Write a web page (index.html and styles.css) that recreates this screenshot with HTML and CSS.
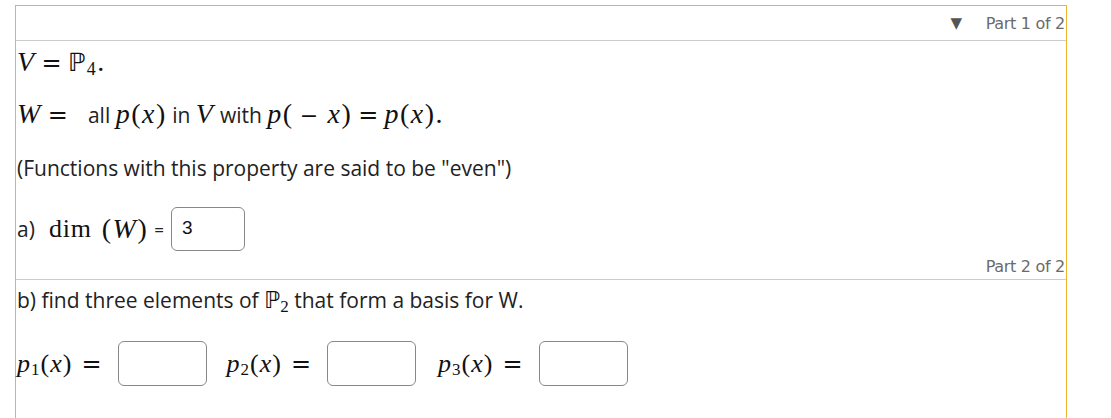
FILE: index.html
```html
<!DOCTYPE html>
<html>
<head>
<meta charset="utf-8">
<link rel="stylesheet" href="styles.css">
</head>
<body>
<div class="frame">
  <div class="part-head first">
    <span class="tri">▼</span>
    <span class="part-label">Part 1 of 2</span>
  </div>
  <div class="part-body">
    <p class="line l1"><span class="m"><i>V</i><span class="op rel">=</span><span class="bb">ℙ</span><sub>4</sub>.</span></p>
    <p class="line l2"><span class="m"><i>W</i><span class="op rel">=</span></span><span class="t gapl">all </span><span class="m"><i>p</i>(<i>x</i>)</span><span class="t"> in </span><span class="m"><i>V</i></span><span class="t"> with </span><span class="m"><i>p</i>(<span class="minus">−</span><i>x</i>)<span class="op rel">=</span><i>p</i>(<i>x</i>).</span></p>
    <p class="line l3 t">(Functions with this property are said to be "even")</p>
    <div class="row l4">
      <span class="t">a)</span>
      <span class="m dim">dim</span>
      <span class="m paren">(<i>W</i>)</span>
      <span class="t eq">=</span>
      <span class="box small">3</span>
    </div>
  </div>
  <div class="part-head second">
    <span class="part-label">Part 2 of 2</span>
  </div>
  <div class="part-body">
    <p class="line l5 t">b) find three elements of <span class="m"><span class="bb">ℙ</span><sub>2</sub></span> that form a basis for W.</p>
    <div class="row l6">
      <span class="m pl"><i>p</i><span class="sub">1</span>(<i>x</i>)</span><span class="op eqp">=</span>
      <span class="box"></span>
      <span class="m pl"><i>p</i><span class="sub">2</span>(<i>x</i>)</span><span class="op eqp">=</span>
      <span class="box"></span>
      <span class="m pl"><i>p</i><span class="sub">3</span>(<i>x</i>)</span><span class="op eqp">=</span>
      <span class="box"></span>
    </div>
  </div>
</div>
</body>
</html>
```
FILE: styles.css
```css
html, body {
  margin: 0;
  padding: 0;
  background: #fff;
}
body {
  padding: 5px 0 0 15px;
  font-family: "Open Sans", "DejaVu Sans", sans-serif;
  color: #222;
  height: 413px;
  overflow: hidden;
}
.frame {
  width: 1050px;
  border: 1px solid #f0b429;
  border-bottom: none;
  height: 420px;
}
.part-head {
  display: flex;
  justify-content: flex-end;
  align-items: center;
  border-bottom: 1px solid #cccccc;
  color: #6b6b6b;
  font-size: 16px;
  font-family: "DejaVu Sans", sans-serif;
  letter-spacing: -0.3px;
}
.part-head.first {
  height: 34px;
}
.part-head.second {
  height: 29px;
  box-sizing: border-box;
  align-items: flex-end;
  padding-bottom: 3px;
}
.tri {
  font-size: 15px;
  color: #555;
  margin-right: 24px;
}
.part-label {
  margin-right: 1px;
}
.part-body {
  padding-left: 1px;
}
.line {
  margin: 0;
  white-space: nowrap;
}
.row {
  display: flex;
  align-items: center;
}
.t {
  font-size: 21px;
  font-family: "Open Sans", "DejaVu Sans", sans-serif;
  color: #222;
  letter-spacing: 0;
}
.m {
  font-family: "Liberation Serif", serif;
  font-size: 28px;
  color: #111;
  letter-spacing: 1.5px;
}
.m i {
  font-family: "Liberation Serif", serif;
  font-style: italic;
}
.op {
  font-family: "DejaVu Serif", serif;
  font-size: 24px;
  letter-spacing: 0;
  color: #111;
}
.rel { margin: 0 6px 0 6px; }
.minus { margin: 0 8px 0 6px; font-family: "DejaVu Serif", serif; font-size: 22px; }
.gapl { margin-left: 14px; }
.bb {
  font-family: "DejaVu Sans", sans-serif;
  font-size: 25px;
}
sub {
  font-size: 18px;
  font-family: "Liberation Serif", serif;
  vertical-align: -4px;
  line-height: 0;
}
.l1 { height: 42px; line-height: 42px; }
.l2 { height: 62px; line-height: 62px; }
.l3 { height: 46px; line-height: 46px; }
.l4 { height: 44px; margin-top: 16px; }
.l4 .dim {
  font-size: 26px;
  margin-left: 14px;
  letter-spacing: 0.8px;
}
.l4 .paren { margin-left: 10px; font-size: 28px; }
.l4 .eq {
  font-size: 17px;
  margin: 0 7px 0 6px;
}
.box {
  display: inline-block;
  box-sizing: border-box;
  width: 89px;
  height: 45px;
  border: 1px solid #888;
  border-radius: 6px;
  background: #fff;
}
.box.small {
  width: 74px;
  height: 44px;
  font-family: "Liberation Sans", sans-serif;
  font-size: 19px;
  color: #111;
  padding: 9px 0 0 10px;
}
.l5 { height: 40px; line-height: 40px; }
.l5 .m { font-size: 22px; letter-spacing: 0; }
.l5 .bb { font-size: 23px; }
.l5 sub { font-size: 17px; }
.l6 { height: 45px; margin-top: 21px; }
.l6 .pl {
  font-size: 26px;
  letter-spacing: 1px;
}
.pl .sub {
  font-size: 17px;
  position: relative;
  top: 3px;
}
.eqp { margin: 0 16px 0 9px; }
.l6 .box + .pl { margin-left: 20px; }
.l6 .box + .pl + .eqp + .box + .pl { margin-left: 22px; }
```
